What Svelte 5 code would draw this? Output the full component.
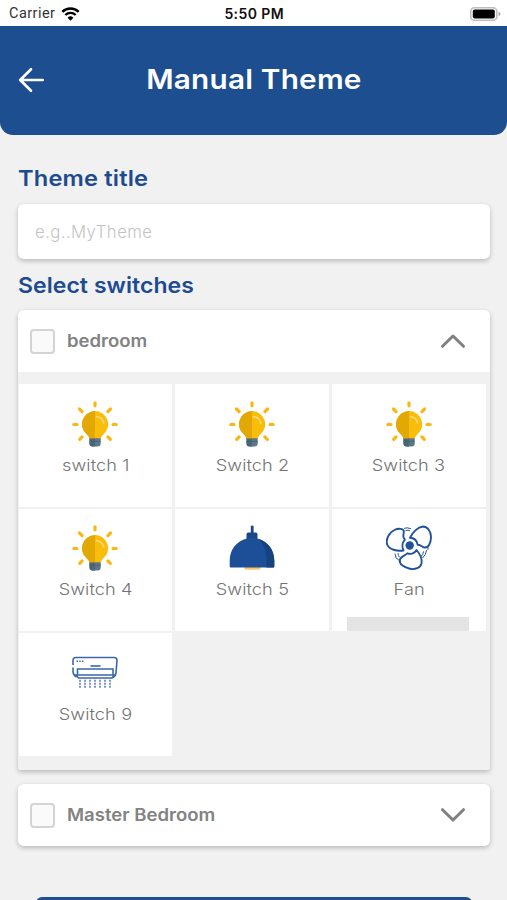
<script>
  const switches = [
    { name: 'switch 1', icon: 'bulb' },
    { name: 'Switch 2', icon: 'bulb' },
    { name: 'Switch 3', icon: 'bulb' },
    { name: 'Switch 4', icon: 'bulb' },
    { name: 'Switch 5', icon: 'lamp' },
    { name: 'Fan', icon: 'fan', slot: true },
    { name: 'Switch 9', icon: 'ac' }
  ];
  let title = $state('');
</script>

{#snippet bulb()}
  <svg class="icon" viewBox="0 0 46 46">
    <g stroke="#fbb612" stroke-width="3.2" stroke-linecap="round">
      <path d="M23 1.8v3M7.5 8l2.6 2.6M38.5 8l-2.6 2.6M1.8 23.5h3.2M41 23.5h3.2M7.7 38.3l2.4-2.4M38.3 38.3l-2.4-2.4" />
    </g>
    <path d="M17.5 36.5h11.2v6q0 3-3 3h-5.2q-3 0-3-3z" fill="#5c7889" />
    <path d="M17.5 36.5h5.6v9h-2.6q-3 0-3-3z" fill="#4b6678" />
    <path d="M23 10a13.2 13.2 0 0 1 8.5 23.3q-2.3 2-2.8 4H17.5q-.5-2-2.8-4A13.2 13.2 0 0 1 23 10z" fill="#f9bd0a" />
    <path d="M23 10v27.3h-5.5q-.5-2-2.8-4A13.2 13.2 0 0 1 23 10z" fill="#e2a805" />
    <path d="M24.5 15.6q6 .7 7.2 6.400" fill="none" stroke="#fad875" stroke-width="1.7" stroke-linecap="round" />
    <path d="M17.5 40.3h11.2" stroke="#46606f" stroke-width=".8" />
  </svg>
{/snippet}

{#snippet lamp()}
  <svg class="icon" viewBox="0 0 46 46">
    <path d="M15.5 42h16v1.5q0 1.2-1.5 1.2H17q-1.5 0-1.5-1.2z" fill="#fcc66d" />
    <path d="M21.8 1q1.400-1.200 2.800 0V7.500h2.200q1.700 0 1.700 1.800v5H17.500v-5q0-1.800 1.700-1.800h2.600z" fill="#184789" />
    <path d="M17 13.700q6-1.500 12 0c9.500 2.500 16.300 11 16.300 22v5.500q0 1.300-1 1.300H1.700q-1 0-1-1.300v-5.500c0-11 6.800-19.500 16.300-22z" fill="#1c4f98" />
    <path d="M29 13.700c9.500 2.500 16.300 11 16.300 22v5.500q0 1.300-1 1.300h-6.800v-8.300c0-9-3.200-16.500-8.500-20.500z" fill="#164280" />
  </svg>
{/snippet}

{#snippet fan()}
  <svg class="icon" viewBox="0 0 46 46" fill="none" stroke="#205298" stroke-width="1.9" stroke-linejoin="round" stroke-linecap="round">
    <circle cx="23.7" cy="20.500" r="4.200" fill="#205298" stroke="none" />
    <path d="M17.500 25.500C11 26.500 3 24.500 1.200 19.500-.5 14.500 3 7.500 8.500 5c3.500-1.800 9-1.700 9.300 1.200.2 2-.9 3.800-.3 6 .4 1.200 1.100 1.700 1.300 2.600-2.500 2.500-3 7-1.300 10.700z" />
    <path d="M24 12.700C26.500 7.500 31.500 2 37 1.500c4.500 0 8.200 5 8 11-.2 5.500-2.500 10.500-6.500 10-2.500-.4-3.700-3-6.800-2.700-.8-4.300-3.700-7-7.700-7.100z" />
    <path d="M30.500 25c3 3.500 6 9 5 13.500-1.200 4.500-6.500 6.300-11.500 5.300-5.500-1-11-4.500-10.200-9 .7-3.300 4.500-3.500 7.500-6.500 3.700 1.300 7 .2 9.200-3.300z" />
    <g stroke-width="1">
      <path d="M18.500 3.200q2.500-1 6 .3M20 5.500q2-.5 3.500 0M37.500 26.800q-.3 3-2.200 4.500M40.500 25.500q-.5 4.500-3.500 7.200M42 22.500v2M9 29q0 4.500 3.500 6M12 28.500q0 2.500 1.500 3.700" />
    </g>
  </svg>
{/snippet}

{#snippet ac()}
  <svg class="icon" viewBox="0 0 46 46" fill="none" stroke="#3c67a9" stroke-width="1.600">
    <path d="M4.500 27Q1 25 1 21.500v-4M1 15v-4.500Q1 7.500 4 7.500h38q3 0 3 3L44 23q-.3 3.500-3.500 4.500" />
    <path d="M5.500 19h35.500v6H5.500zM3.800 25h38.700l-2.500 3H6.500z" />
    <path d="M18.500 16h10" />
    <path d="M4.500 11.200h7" stroke-dasharray="1.500 1.200" />
    <path d="M8 29.700v8M13 29.700v8M18 29.700v8M23 29.700v8M28 29.700v8M33 29.700v8M38 29.700v8" stroke="#5f7db5" stroke-dasharray="2 1" />
  </svg>
{/snippet}

<div class="screen">
  <div class="status">
    <div class="carrier">
      <span>Carrier</span>
      <svg width="19" height="14" viewBox="0 0 19 14">
        <path d="M9.500 13.800 6.600 10.700a4.200 4.200 0 0 1 5.800 0z" fill="#000" />
        <path d="M4.300 8a7.500 7.500 0 0 1 10.400 0M1.300 4.900a11.700 11.700 0 0 1 16.400 0" fill="none" stroke="#000" stroke-width="2.400" />
      </svg>
    </div>
    <span class="time">5:50 PM</span>
    <svg class="battery" width="31" height="14" viewBox="0 0 31 14">
      <rect x=".8" y=".8" width="26" height="12.400" rx="3.500" fill="#fff" stroke="#bdbdbd" stroke-width="1.500" />
      <rect x="2.800" y="2.600" width="22" height="8.800" rx="1.800" fill="#000" />
      <path d="M28.500 4.700q2 .8 2 2.300t-2 2.300z" fill="#aaa" />
    </svg>
  </div>

  <header>
    <svg width="27" height="26" viewBox="0 0 27 26" fill="none" stroke="#fff" stroke-width="2.700" stroke-linecap="round" stroke-linejoin="round">
      <path d="M13 2.300 2.200 13 13 23.700M2.500 13h22.200" />
    </svg>
    <h1><span>Manual Theme</span></h1>
  </header>

  <main>
    <h2 class="l1">Theme title</h2>
    <input placeholder="e.g..MyTheme" bind:value={title} />
    <h2 class="l2">Select switches</h2>

    <section class="panel">
      <div class="room">
        <span class="check"></span>
        <span class="label">bedroom</span>
        <svg width="26" height="16" viewBox="0 0 26 16"><path d="M2.500 13.300 13 3l10.500 10.300" /></svg>
      </div>
      <div class="grid">
        {#each switches as s}
          <div class="tile">
            {#if s.icon === 'bulb'}{@render bulb()}
            {:else if s.icon === 'lamp'}{@render lamp()}
            {:else if s.icon === 'fan'}{@render fan()}
            {:else}{@render ac()}{/if}
            <span class="name">{s.name}</span>
            {#if s.slot}<span class="slot"></span>{/if}
          </div>
        {/each}
      </div>
    </section>

    <section class="panel second">
      <div class="room">
        <span class="check"></span>
        <span class="label">Master Bedroom</span>
        <svg width="26" height="16" viewBox="0 0 26 16"><path d="M2.500 2.700 13 13 23.500 2.700" /></svg>
      </div>
    </section>

    <div class="submit"></div>
  </main>
</div>

<style>
  :global(body) { margin: 0; }
  .screen {
    width: 507px; height: 900px; overflow: hidden; box-sizing: border-box;
    display: flex; flex-direction: column;
    background: #f1f1f1; font-family: Inter, "Open Sans", sans-serif;
  }
  .status {
    height: 26px; flex: none; background: #fff; display: flex; align-items: center;
    justify-content: space-between; padding: 1px 6px 0 9px; box-sizing: border-box; color: #111;
  }
  .carrier { flex: 1; display: flex; align-items: center; gap: 6px; font: 14.500px/20px Roboto, sans-serif; letter-spacing: .45px; color: #333; }
  .time { font-size: 14px; font-weight: 600; letter-spacing: .4px; }
  .status .battery { flex: none; margin-left: 186px; display: block; }
  header {
    height: 109px; flex: none; box-sizing: border-box; padding: 0 18px 2px; background: #1c4e90;
    border-radius: 0 0 13px 13px; display: flex; align-items: center;
  }
  h1 {
    margin: 0; flex: 1; padding-right: 26px; text-align: center; white-space: nowrap;
    font-size: 27px; line-height: 34px; font-weight: 600; letter-spacing: .200px; color: #fff;
  }
  h1 span { display: inline-block; transform: scaleX(1.1); }
  main { padding: 0 17px 0 18px; display: flex; flex-direction: column; }
  h2 {
    margin: 0; font-size: 21.500px; line-height: 28px; font-weight: 600; color: #1d4b8f;
    white-space: nowrap; transform-origin: 0 50%;
  }
  .l1 { margin-top: 29px; letter-spacing: .15px; transform: scaleX(1.1); }
  .l2 { margin-top: 13px; letter-spacing: .05px; transform: scaleX(1.07); }
  input {
    margin: 12px 0 0; height: 55px; box-sizing: border-box; border: 0; border-radius: 6px;
    padding: 0 17px; font: 300 16.800px Inter, sans-serif; letter-spacing: .4px; background: #fff;
    box-shadow: 0 2px 5px rgba(0, 0, 0, .23); outline: 0;
  }
  input::placeholder { color: #c4c4c4; opacity: 1; }
  .l2 { margin-top: 12px; }
  .panel { margin-top: 11px; border-radius: 6px 6px 2px 2px; background: #f1f1f1; box-shadow: 0 2px 5px rgba(0, 0, 0, .23); }
  .room {
    height: 62px; box-sizing: border-box; padding: 0 24px 0 12px; background: #fff;
    border-radius: 6px 6px 0 0; display: flex; align-items: center;
    color: #828282; font-size: 17px; font-weight: 600; white-space: nowrap;
  }
  .second { margin-top: 14px; border-radius: 6px; }
  .second .room { border-radius: 6px; }
  .check { width: 25px; height: 25px; box-sizing: border-box; border: 2px solid #d4d4d4; border-radius: 4px; background: #fafafa; margin-right: 12px; }
  .room svg { margin-left: auto; fill: none; stroke: #808080; stroke-width: 3; stroke-linecap: round; stroke-linejoin: round; }
  .label { transform: scaleX(1.09); transform-origin: 0 50%; }
  .grid {
    display: grid; grid-template-columns: repeat(3, 153.500px); grid-auto-rows: 122.500px;
    gap: 2px 3.300px; padding: 12px 0 14.500px .5px;
  }
  .tile { position: relative; background: #fff; display: flex; flex-direction: column; align-items: center; padding-top: 16.500px; box-sizing: border-box; }
  .icon { width: 46px; height: 46px; flex: none; }
  .name { margin-top: 7px; font-size: 16.500px; line-height: 22px; font-weight: 300; letter-spacing: .1px; color: #747474; white-space: nowrap; transform: scaleX(1.1); }
  .slot { position: absolute; left: 15px; bottom: 0; width: 122px; height: 14px; background: #e4e4e4; }
  .submit { margin: 51px 18px 0; height: 55px; flex: none; border-radius: 6px; background: #1c4e90; }
</style>
